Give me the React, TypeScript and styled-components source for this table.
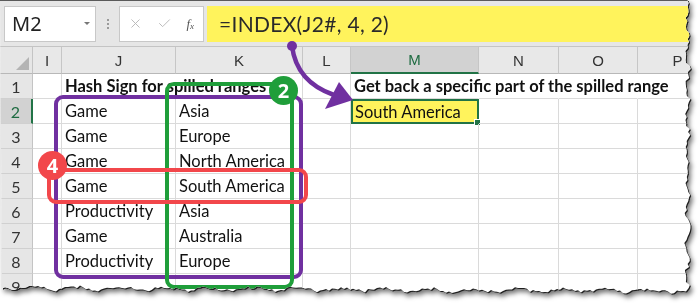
import React from "react";
import styled, { createGlobalStyle, css } from "styled-components";
import { X, Check } from "lucide-react";

const GlobalStyle = createGlobalStyle`
  html, body {
    margin: 0;
    padding: 0;
    background: #ffffff;
  }
`;

// torn paper edge, built once from a small seeded noise
const tornEdge = (() => {
  let seed = 7;
  const rnd = () => {
    seed = (seed * 9301 + 49297) % 233280;
    return seed / 233280;
  };
  const pts: string[] = ["0px 0px", "694px 0px"];
  for (let y = 0; y <= 288; y += 3) {
    const x = 687.5 + Math.sin(y / 5) * 1.6 + (rnd() - 0.5) * 3.4;
    pts.push(`${x.toFixed(1)}px ${y}px`);
  }
  for (let x = 686; x >= 0; x -= 3) {
    const base = 288 + (x / 686) * 3;
    const y = base + Math.sin(x / 7) * 1.5 + (rnd() - 0.5) * 3.4;
    pts.push(`${x}px ${y.toFixed(1)}px`);
  }
  return `polygon(${pts.join(", ")})`;
})();

const Frame = styled.div`
  width: 700px;
  height: 303px;
  overflow: hidden;
  background: #fff;
`;

const Shadow = styled.div`
  filter: drop-shadow(1px 1px 0 #1e1e1e) drop-shadow(2px 3px 2.5px rgba(0, 0, 0, 0.55));
`;

const Paper = styled.div`
  position: relative;
  width: 700px;
  height: 303px;
  background: #fff;
  clip-path: ${tornEdge};
  font-family: "Lato", "Liberation Sans", sans-serif;
  color: #111;
`;

const Toolbar = styled.div`
  height: 47px;
  box-sizing: border-box;
  border-top: 1px solid #5a5a5a;
  border-bottom: 1px solid #c4c4c4;
  background: #e6e6e6;
  display: flex;
  align-items: center;
  padding: 0 0 0 4px;
`;

const NameBox = styled.div`
  width: 92px;
  height: 36px;
  box-sizing: border-box;
  background: #fff;
  border: 1px solid #c8c8c8;
  display: flex;
  align-items: center;
  justify-content: space-between;
  padding: 0 5px 0 7px;
  font-family: "Noto Sans", "Open Sans", sans-serif;
  font-size: 20px;
  color: #222;
`;

const Caret = styled.span`
  width: 0;
  height: 0;
  border-left: 3px solid transparent;
  border-right: 3px solid transparent;
  border-top: 3px solid #777;
`;

const Grip = styled.div`
  width: 23px;
  display: flex;
  flex-direction: column;
  align-items: center;
  gap: 2px;
  span {
    width: 2px;
    height: 2px;
    background: #9a9a9a;
  }
`;

const ButtonBox = styled.div`
  width: 85px;
  height: 36px;
  box-sizing: border-box;
  background: #fff;
  border: 1px solid #c8c8c8;
  display: flex;
  align-items: center;
  justify-content: space-between;
  padding: 0 9px 0 8px;
  color: #b8b8b8;
`;

const Fx = styled.span`
  font-family: "Liberation Serif", serif;
  font-style: italic;
  font-size: 13px;
  color: #555;
  sub {
    font-size: 9px;
    vertical-align: -1px;
  }
`;

const FormulaBar = styled.div`
  flex: 1;
  height: 36px;
  margin-left: 3px;
  background: #fff35c;
  display: flex;
  align-items: center;
  padding-left: 12px;
  font-family: "Lato", "Liberation Sans", sans-serif;
  font-size: 21px;
  color: #2a2a2a;
  letter-spacing: 0.3px;
`;

const Grid = styled.div`
  display: grid;
  grid-template-columns: 33px 29px 114px 127px 48px 128px 80px 79px 80px;
  grid-template-rows: 27px repeat(9, 25px);
`;

const Corner = styled.div`
  background: #e6e6e6;
  border-right: 1px solid #c4c4c4;
  border-bottom: 1px solid #b8b8b8;
  box-sizing: border-box;
  position: relative;
  &::after {
    content: "";
    position: absolute;
    right: 3px;
    bottom: 3px;
    width: 0;
    height: 0;
    border-left: 13px solid transparent;
    border-bottom: 13px solid #b4b4b4;
  }
`;

const ColHead = styled.div<{ $active?: boolean }>`
  box-sizing: border-box;
  background: #e8e8e8;
  border-right: 1px solid #c6c6c6;
  border-bottom: 1px solid #b8b8b8;
  display: flex;
  align-items: center;
  justify-content: center;
  font-family: "Liberation Sans", sans-serif;
  font-size: 15px;
  color: #333;
  ${(p) =>
    p.$active &&
    css`
      background: #d2d2d2;
      color: #1e6b41;
      border-bottom: 2px solid #217346;
    `}
`;

const RowHead = styled.div<{ $active?: boolean }>`
  box-sizing: border-box;
  background: #e6e6e6;
  border-right: 1px solid #c4c4c4;
  border-bottom: 1px solid #d0d0d0;
  display: flex;
  align-items: center;
  justify-content: center;
  font-size: 16px;
  color: #333;
  ${(p) =>
    p.$active &&
    css`
      background: #d2d2d2;
      color: #1e6b41;
      border-right: 2px solid #217346;
    `}
`;

const Cell = styled.div<{ $bold?: boolean; $open?: boolean; $selected?: boolean }>`
  position: relative;
  box-sizing: border-box;
  border-right: 1px solid ${(p) => (p.$open ? "transparent" : "#dadada")};
  border-bottom: 1px solid #dadada;
  display: flex;
  align-items: center;
  padding-left: 3px;
  white-space: nowrap;
  font-size: 16.5px;
  font-weight: ${(p) => (p.$bold ? 700 : 400)};
  overflow: visible;
  z-index: ${(p) => (p.$bold ? 1 : 0)};
  ${(p) =>
    p.$selected &&
    css`
      background: #fff35c;
      border: 2px solid #217346;
      padding-left: 2px;
      &::after {
        content: "";
        position: absolute;
        right: -4px;
        bottom: -4px;
        width: 5px;
        height: 5px;
        background: #217346;
        border: 1px solid #fff;
      }
    `}
`;

const Outline = styled.div<{ $color: string }>`
  position: absolute;
  box-sizing: border-box;
  border: 4px solid ${(p) => p.$color};
  border-radius: 9px;
  pointer-events: none;
  z-index: 3;
`;

const PurpleBox = styled(Outline)`
  left: 54px;
  top: 95px;
  width: 249px;
  height: 184px;
`;

const GreenBox = styled(Outline)`
  left: 165px;
  top: 82px;
  width: 129px;
  height: 207px;
  z-index: 4;
`;

const RedBox = styled(Outline)`
  left: 47px;
  top: 168px;
  width: 261px;
  height: 36px;
  z-index: 5;
`;

const Badge = styled.div<{ $color: string }>`
  position: absolute;
  width: 29px;
  height: 29px;
  border-radius: 50%;
  background: ${(p) => p.$color};
  color: #fff;
  display: flex;
  align-items: center;
  justify-content: center;
  font-family: "Open Sans", "Liberation Sans", sans-serif;
  font-weight: 700;
  font-size: 20px;
  z-index: 6;
`;

const GreenBadge = styled(Badge)`
  left: 269px;
  top: 76px;
`;

const RedBadge = styled(Badge)`
  left: 38px;
  top: 151px;
`;

const Arrow = styled.svg`
  position: absolute;
  left: 0;
  top: 0;
  z-index: 7;
  pointer-events: none;
`;

const colLetters = ["I", "J", "K", "L", "M", "N", "O", "P"];

const rows: [string, string][] = [
  ["Game", "Asia"],
  ["Game", "Europe"],
  ["Game", "North America"],
  ["Game", "South America"],
  ["Productivity", "Asia"],
  ["Game", "Australia"],
  ["Productivity", "Europe"],
  ["", ""],
];

export default function App() {
  return (
    <>
      <GlobalStyle />
      <Frame>
        <Shadow>
          <Paper>
            <Toolbar>
              <NameBox>
                M2
                <Caret />
              </NameBox>
              <Grip>
                <span />
                <span />
                <span />
              </Grip>
              <ButtonBox>
                <X size={15} strokeWidth={1.5} />
                <Check size={15} strokeWidth={1.5} />
                <Fx>
                  f<sub>x</sub>
                </Fx>
              </ButtonBox>
              <FormulaBar>=INDEX(J2#, 4, 2)</FormulaBar>
            </Toolbar>

            <Grid>
              <Corner />
              {colLetters.map((c) => (
                <ColHead key={c} $active={c === "M"}>
                  {c}
                </ColHead>
              ))}

              <RowHead>1</RowHead>
              <Cell />
              <Cell $bold $open>
                Hash Sign for spilled ranges
              </Cell>
              <Cell />
              <Cell />
              <Cell $bold $open>
                Get back a specific part of the spilled range
              </Cell>
              <Cell $open />
              <Cell $open />
              <Cell />

              {rows.map(([j, k], i) => {
                const n = i + 2;
                return (
                  <React.Fragment key={n}>
                    <RowHead $active={n === 2}>{n}</RowHead>
                    <Cell />
                    <Cell>{j}</Cell>
                    <Cell>{k}</Cell>
                    <Cell />
                    <Cell $selected={n === 2}>{n === 2 ? "South America" : ""}</Cell>
                    <Cell />
                    <Cell />
                    <Cell />
                  </React.Fragment>
                );
              })}
            </Grid>

            <PurpleBox $color="#7030a0" />
            <GreenBox $color="#1f9e3a" />
            <RedBox $color="#f2474b" />
            <GreenBadge $color="#1f9e3a">2</GreenBadge>
            <RedBadge $color="#f2474b">4</RedBadge>

            <Arrow width="700" height="303" viewBox="0 0 700 303">
              <circle cx="292" cy="46" r="5" fill="#7030a0" />
              <path
                d="M292 46 C 295 70, 308 86, 334 95"
                fill="none"
                stroke="#7030a0"
                strokeWidth="4.5"
              />
              <polygon points="353,100 339,82 325,109" fill="#7030a0" />
            </Arrow>
          </Paper>
        </Shadow>
      </Frame>
    </>
  );
}
